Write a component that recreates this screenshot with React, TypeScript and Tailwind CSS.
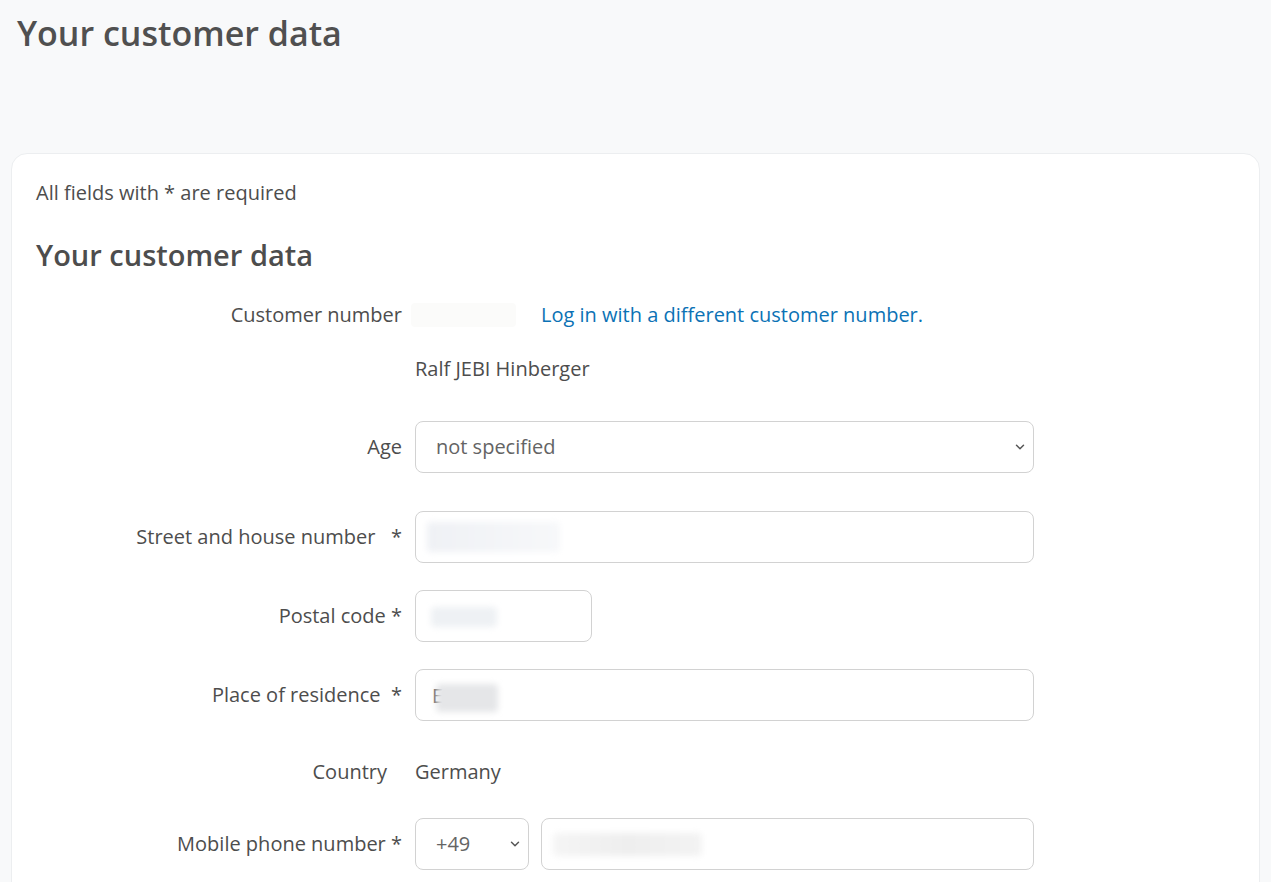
import { ChevronDown } from "lucide-react";

const font = { fontFamily: '"Open Sans", "Liberation Sans", sans-serif' };

function Label({ children, className = "" }: { children?: React.ReactNode; className?: string }) {
  return (
    <div className={"w-[379px] shrink-0 pr-[13px] text-right text-[20px] text-[#4d4d4d] " + className}>
      {children}
    </div>
  );
}

function Blur({ className }: { className: string }) {
  return <div className={"absolute rounded-sm blur-[3px] " + className} />;
}

function Select({ value, className = "" }: { value: string; className?: string }) {
  return (
    <div
      className={
        "flex h-[52px] items-center justify-between rounded-[8px] border border-[#d2d2d2] bg-white pl-5 pr-[6px] text-[20px] text-[#646464] " +
        className
      }
    >
      <span>{value}</span>
      <ChevronDown className="h-3.5 w-3.5 text-[#555]" strokeWidth={2.5} />
    </div>
  );
}

function Input({ className = "", children }: { className?: string; children?: React.ReactNode }) {
  return (
    <div className={"relative h-[52px] rounded-[8px] border border-[#d2d2d2] bg-white " + className}>
      {children}
    </div>
  );
}

export default function App() {
  return (
    <div className="min-h-[882px] bg-[#f8f9fa] px-[11px] pt-[8px] text-[#4d4d4d]" style={font}>
      <h1 className="pl-[6px] text-[34px] font-semibold leading-[50px] text-[#505050]">Your customer data</h1>

      <div className="mt-[95px] rounded-[16px] border border-[#eceef0] bg-white px-[24px] pb-10 pt-[25px]">
        <p className="text-[20px] leading-[28px]">All fields with * are required</p>
        <h2 className="mt-[28px] text-[29px] font-semibold leading-[40px] text-[#4d4d4d]">Your customer data</h2>

        <div className="mt-[26px] flex items-center leading-[28px]">
          <Label>Customer number</Label>
          <div className="h-[24px] w-[105px] -ml-[4px] rounded bg-[#fbfbfa]" />
          <a className="ml-[25px] text-[20px] text-[#0b72b5]" href="#">
            Log in with a different customer number.
          </a>
        </div>

        <div className="mt-[26px] flex items-center leading-[28px]">
          <Label />
          <span className="text-[20px]">Ralf JEBI Hinberger</span>
        </div>

        <div className="mt-[38px] flex items-center">
          <Label>Age</Label>
          <Select value="not specified" className="w-[619px]" />
        </div>

        <div className="mt-[38px] flex items-center">
          <Label>Street and house number &nbsp;&nbsp;*</Label>
          <Input className="w-[619px]">
            <Blur className="left-[11px] top-[10px] h-[30px] w-[133px] bg-gradient-to-r from-[#eff1f5] to-[#f7f8fa]" />
          </Input>
        </div>

        <div className="mt-[27px] flex items-center">
          <Label>Postal code *</Label>
          <Input className="w-[177px]">
            <Blur className="left-[15px] top-[16px] h-[20px] w-[66px] bg-[#eef1f4]" />
          </Input>
        </div>

        <div className="mt-[27px] flex items-center">
          <Label>Place of residence &nbsp;*</Label>
          <Input className="w-[619px]">
            <span className="absolute left-[16px] top-[11px] text-[20px] text-[#4d4d4d]">E</span>
            <Blur className="left-[20px] top-[14px] h-[28px] w-[62px] bg-[#e5e6e8]" />
          </Input>
        </div>

        <div className="mt-[37px] flex items-center leading-[28px]">
          <Label className="pr-[28px]">Country</Label>
          <span className="text-[20px]">Germany</span>
        </div>

        <div className="mt-[32px] flex items-center">
          <Label>Mobile phone number *</Label>
          <Select value="+49" className="w-[114px]" />
          <Input className="ml-[12px] w-[493px]">
            <Blur className="left-[11px] top-[14px] h-[23px] w-[149px] bg-gradient-to-r from-[#f5f5f5] via-[#eeeeee] to-[#f3f3f3]" />
          </Input>
        </div>
      </div>
    </div>
  );
}
